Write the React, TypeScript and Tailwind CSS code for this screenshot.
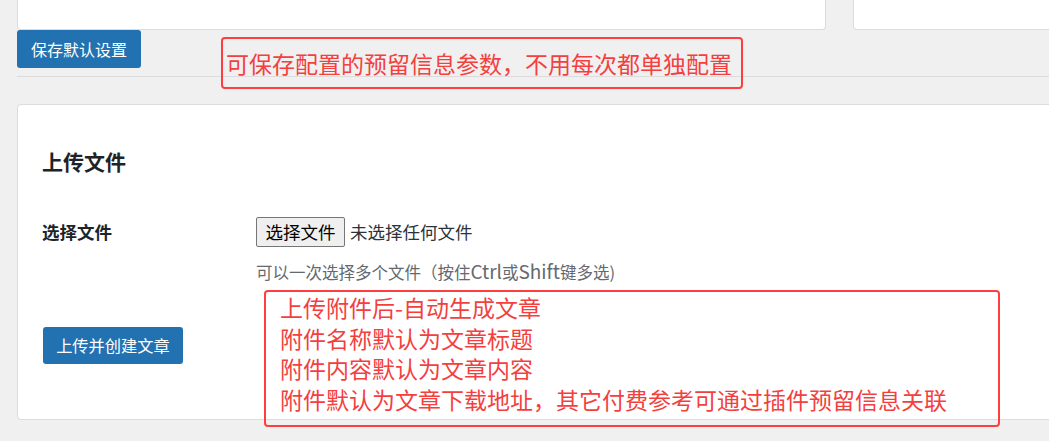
import React from 'react';

// Nota vermelha por cima da tela (anotação do print)
const Nota = ({ children, className }: { children: React.ReactNode; className?: string }) => (
    <div className={`absolute border-2 border-[#ff3f3f] rounded-[4px] text-[#f43f3f] text-[23px] ${className ?? ''}`}>
        {children}
    </div>
);

const App: React.FC = () => {
    return (
        <div className="relative w-[1049px] h-[441px] overflow-hidden bg-[#f0f0f0] font-['Noto_Sans_CJK_SC','Noto_Sans',sans-serif]">
            {/* cards de cima (cortados) */}
            <div className="flex gap-[27px] pl-[17px]">
                <div className="w-[809px] shrink-0 h-[30px] bg-white border border-t-0 border-[#dcdcde] rounded-b-[4px]" />
                <div className="w-[300px] shrink-0 h-[30px] bg-white border border-t-0 border-r-0 border-[#dcdcde] rounded-bl-[4px]" />
            </div>

            <button className="ml-[17px] block w-[124px] h-[38px] bg-[#2271b1] text-white text-[16px] leading-[38px] rounded-[3px]">
                保存默认设置
            </button>

            <div className="ml-[17px] mt-[8px] border-t border-[#dcdcdc]" />

            {/* card de upload */}
            <div className="ml-[17px] mt-[27px] w-[1100px] h-[316px] bg-white border border-[#dcdcde] rounded-[4px] pl-[24px] pt-[46px]">
                <h2 className="text-[21px] leading-[21px] font-semibold text-[#1d2327]">上传文件</h2>

                <div className="flex mt-[45px]">
                    <label className="w-[214px] h-[30px] leading-[30px] text-[17.5px] font-semibold text-[#1d2327]">选择文件</label>
                    <div>
                        <div className="flex items-center h-[30px]">
                            <span className="h-[30px] w-[89px] flex items-center justify-center bg-[#efefef] border border-[#767676] rounded-[2px] text-[17.5px] text-black">
                                选择文件
                            </span>
                            <span className="ml-[5px] text-[17.5px] text-[#2c3338]">未选择任何文件</span>
                        </div>
                        <p className="mt-[14px] text-[16.5px] leading-[20px] text-[#646970]">
                            可以一次选择多个文件（按住<span className="text-[19px]">Ctrl</span>或<span className="text-[19px]">Shift</span>键多选)
                        </p>
                    </div>
                </div>

                <button className="mt-[45px] ml-[1px] block w-[140px] h-[37px] bg-[#2271b1] text-white text-[16.25px] leading-[37px] rounded-[3px]">
                    上传并创建文章
                </button>
            </div>

            <Nota className="left-[221px] top-[37px] w-[522px] h-[52px] flex items-center pl-[3px] leading-none">
                可保存配置的预留信息参数，不用每次都单独配置
            </Nota>

            <Nota className="left-[264px] top-[290px] w-[736px] h-[137px] pl-[14px] leading-[30.5px]">
                <p>上传附件后-自动生成文章</p>
                <p>附件名称默认为文章标题</p>
                <p>附件内容默认为文章内容</p>
                <p>附件默认为文章下载地址，其它付费参考可通过插件预留信息关联</p>
            </Nota>
        </div>
    );
};

export default App;
